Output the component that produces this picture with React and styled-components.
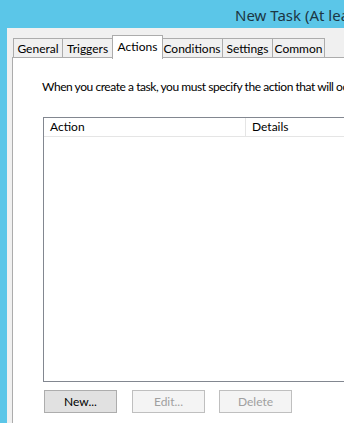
import React from "react";
import styled, { createGlobalStyle } from "styled-components";

const Global = createGlobalStyle`
  html, body { margin: 0; padding: 0; overflow: hidden; }
  body { font-family: "Lato", "Noto Sans", sans-serif; }
`;

const Window = styled.div`
  width: 344px;
  height: 423px;
  background: #5bc6e8;
  display: flex;
  flex-direction: column;
  overflow: hidden;
`;

const TitleBar = styled.div`
  height: 28px;
  flex: none;
  display: flex;
  align-items: center;
  padding-left: 235px;
  padding-top: 1px;
  box-sizing: border-box;
  font-family: "Noto Sans", sans-serif;
  font-size: 15px;
  color: #1c3644;
  white-space: nowrap;
  overflow: hidden;
`;

const Body = styled.div`
  flex: 1;
  margin-left: 7px;
  background: #f0f0f0;
  display: flex;
  flex-direction: column;
  padding-top: 7px;
  padding-left: 5px;
  min-height: 0;
`;

const TabStrip = styled.div`
  display: flex;
  align-items: flex-end;
  height: 23px;
  padding-left: 1px;
  position: relative;
  z-index: 1;
  flex: none;
`;

const Tab = styled.div`
  box-sizing: border-box;
  width: ${(p) => p.$w}px;
  height: ${(p) => (p.$active ? 24 : 20)}px;
  margin: ${(p) => (p.$active ? "0 -1px -1px -1px" : "0")};
  margin-left: ${(p) => (p.$active ? -1 : p.$first ? 0 : -1)}px;
  border: 1px solid #acacac;
  border-bottom: ${(p) => (p.$active ? "none" : "1px solid #acacac")};
  background: ${(p) => (p.$active ? "#ffffff" : "#f0f0f0")};
  font-size: 12px;
  color: #000;
  display: flex;
  justify-content: center;
  align-items: ${(p) => (p.$active ? "flex-start" : "center")};
  padding-top: ${(p) => (p.$active ? 3 : 0)}px;
  position: relative;
  z-index: ${(p) => (p.$active ? 2 : 1)};
  white-space: nowrap;
`;

const Panel = styled.div`
  flex: 1;
  margin-top: -1px;
  border-top: 1px solid #acacac;
  border-left: 1px solid #acacac;
  background: #ffffff;
  display: flex;
  flex-direction: column;
  padding-left: 30px;
  padding-top: 20px;
  min-height: 0;
`;

const Intro = styled.div`
  font-size: 12px;
  letter-spacing: -0.45px;
  color: #000;
  white-space: nowrap;
  height: 17px;
  line-height: 17px;
  margin-left: -1px;
`;

const ListBox = styled.div`
  margin-top: 22px;
  width: 400px;
  height: 265px;
  box-sizing: border-box;
  border: 1px solid #828790;
  background: #fff;
  flex: none;
`;

const HeaderRow = styled.div`
  display: flex;
  height: 18px;
  border-bottom: 1px solid #e5e5e5;
`;

const HeaderCell = styled.div`
  width: ${(p) => p.$w}px;
  box-sizing: border-box;
  padding-left: 6px;
  font-size: 12px;
  line-height: 18px;
  color: #000;
  border-right: ${(p) => (p.$divider ? "1px solid #e5e5e5" : "none")};
`;

const ButtonRow = styled.div`
  display: flex;
  gap: 15px;
  margin-top: 8px;
  padding-left: 1px;
`;

const Button = styled.div`
  box-sizing: border-box;
  width: 73px;
  height: 23px;
  border: 1px solid ${(p) => (p.$disabled ? "#bfbfbf" : "#adadad")};
  background: ${(p) => (p.$disabled ? "#f4f4f4" : "#e1e1e1")};
  color: ${(p) => (p.$disabled ? "#a0a0a0" : "#000")};
  font-size: 12px;
  display: flex;
  align-items: center;
  justify-content: center;
  margin-left: ${(p) => p.$ml || 0}px;
`;

const tabs = [
  { label: "General", w: 50 },
  { label: "Triggers", w: 51 },
  { label: "Actions", w: 51, active: true },
  { label: "Conditions", w: 62 },
  { label: "Settings", w: 51 },
  { label: "Common", w: 53 },
];

export default function App() {
  return (
    <>
      <Global />
      <Window>
        <TitleBar>New Task (At least one action is required)</TitleBar>
        <Body>
          <TabStrip>
            {tabs.map((t, i) => (
              <Tab key={t.label} $w={t.w} $active={t.active} $first={i === 0}>
                {t.label}
              </Tab>
            ))}
          </TabStrip>
          <Panel>
            <Intro>
              When you create a task, you must specify the action that will occur when your task starts.
            </Intro>
            <ListBox>
              <HeaderRow>
                <HeaderCell $w={202} $divider>Action</HeaderCell>
                <HeaderCell $w={190}>Details</HeaderCell>
              </HeaderRow>
            </ListBox>
            <ButtonRow>
              <Button>New...</Button>
              <Button $disabled>Edit...</Button>
              <Button $disabled $ml={-1}>Delete</Button>
            </ButtonRow>
          </Panel>
        </Body>
      </Window>
    </>
  );
}
